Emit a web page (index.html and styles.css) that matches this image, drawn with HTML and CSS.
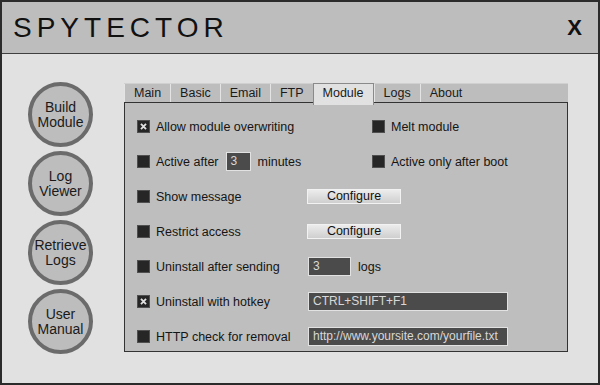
FILE: index.html
```html
<!DOCTYPE html>
<html>
<head>
    <link rel="stylesheet" href="styles.css">
</head>
<body>
    <div class="window">
        <div class="titlebar">
            <h1 class="title">SPYTECTOR</h1>
            <span class="close">X</span>
        </div>

        <div class="main">
            <div class="side">
                <div class="round-btn">Build<br>Module</div>
                <div class="round-btn">Log<br>Viewer</div>
                <div class="round-btn">Retrieve<br>Logs</div>
                <div class="round-btn">User<br>Manual</div>
            </div>

            <div class="panel">
                <ul class="tabs">
                    <li class="tab">Main</li>
                    <li class="tab">Basic</li>
                    <li class="tab">Email</li>
                    <li class="tab">FTP</li>
                    <li class="tab active">Module</li>
                    <li class="tab">Logs</li>
                    <li class="tab">About</li>
                </ul>

                <div class="tab-body">
                    <label class="opt span2"><span class="check checked"><svg viewBox="0 0 13 13"><path d="M3.5 3.5 L9.5 9.5 M9.5 3.5 L3.5 9.5"/></svg></span>Allow module overwriting</label>
                    <label class="opt col3"><span class="check"></span>Melt module</label>

                    <label class="opt span2"><span class="check"></span>Active after <span class="field mins">3</span> minutes</label>
                    <label class="opt col3"><span class="check"></span>Active only after boot</label>

                    <label class="opt"><span class="check"></span>Show message</label>
                    <div class="rest"><button class="config-btn">Configure</button></div>

                    <label class="opt"><span class="check"></span>Restrict access</label>
                    <div class="rest"><button class="config-btn">Configure</button></div>

                    <label class="opt"><span class="check"></span>Uninstall after sending</label>
                    <div class="rest"><span class="field num">3</span> logs</div>

                    <label class="opt"><span class="check checked"><svg viewBox="0 0 13 13"><path d="M3.5 3.5 L9.5 9.5 M9.5 3.5 L3.5 9.5"/></svg></span>Uninstall with hotkey</label>
                    <div class="rest"><span class="field wide">CTRL+SHIFT+F1</span></div>

                    <label class="opt"><span class="check"></span>HTTP check for removal</label>
                    <div class="rest"><span class="field wide">http://www.yoursite.com/yourfile.txt</span></div>
                </div>
            </div>
        </div>
    </div>
</body>
</html>
```

FILE: styles.css
```css
/* Janela principal */
body {
    margin: 0;
    font-family: "Liberation Sans", Arial, sans-serif;
    color: #151515;
}

.window {
    width: 600px;
    height: 385px;
    box-sizing: border-box;
    border: 2px solid #2b2b2b;
    background-color: #e1e1e1;
}

.titlebar {
    height: 51px;
    background-color: #bdbdbd;
    border-bottom: 1px solid #3f3f3f;
    display: flex;
    align-items: center;
    justify-content: space-between;
    padding: 0 16px 0 11px;
}

.title {
    margin: 0;
    font-size: 28px;
    font-weight: normal;
    letter-spacing: 5px;
    color: #111;
}

.close {
    font-size: 22px;
    font-weight: bold;
    color: #111;
}

.main {
    display: flex;
    padding: 28px 0 0 26px;
}

/* Botoes redondos da esquerda */
.side {
    display: flex;
    flex-direction: column;
    gap: 4px;
}

.round-btn {
    width: 65px;
    height: 65px;
    box-sizing: border-box;
    border: 4px solid #6b6b6b;
    border-radius: 50%;
    background-color: #bdbdbd;
    display: flex;
    align-items: center;
    justify-content: center;
    text-align: center;
    font-size: 14px;
    line-height: 15px;
    color: #1a1a1a;
}

/* Painel com abas */
.panel {
    width: 444px;
    margin: 1px 0 0 31px;
}

.tabs {
    list-style: none;
    margin: 0;
    padding: 0;
    height: 19px;
    display: flex;
    background-color: #bdbdbd;
    border-top: 1px solid #d0d0d0;
    box-sizing: border-box;
}

.tab {
    padding: 0 9px;
    border-left: 1px solid #e4e4e4;
    font-size: 12.5px;
    line-height: 18px;
    color: #1a1a1a;
}

.tab.active {
    background-color: #e1e1e1;
    border: 1px solid #8a8a8a;
    border-bottom: none;
    margin-top: -1px;
    height: 21px;
    position: relative;
    z-index: 1;
}

.tab-body {
    height: 250px;
    box-sizing: border-box;
    border: 1px solid #333;
    background-color: #bebebe;
    padding: 6px 0 0 12px;
    display: grid;
    grid-template-columns: 170px 65px 1fr;
    grid-auto-rows: 35px;
    align-items: center;
    overflow: hidden;
}

.opt {
    display: flex;
    align-items: center;
    font-size: 12.5px;
    white-space: nowrap;
}

.span2 {
    grid-column: 1 / 3;
}

.col3 {
    grid-column: 3;
}

.rest {
    grid-column: 2 / 4;
    display: flex;
    align-items: center;
    font-size: 12.5px;
}

.check {
    width: 13px;
    height: 13px;
    box-sizing: border-box;
    background-color: #262626;
    border: 1px solid #505050;
    margin-right: 6px;
    flex-shrink: 0;
}

.check svg {
    display: block;
    width: 11px;
    height: 11px;
}

.check path {
    stroke: #e0e0e0;
    stroke-width: 2.2;
    fill: none;
}

.field {
    height: 19px;
    box-sizing: border-box;
    background-color: #4b4b4b;
    border: 1px solid #e2e2e2;
    color: #d8d8d8;
    font-size: 12px;
    line-height: 17px;
    padding-left: 4px;
    white-space: nowrap;
    overflow: hidden;
}

.mins {
    width: 25px;
    margin: 0 7px 0 7px;
}

.num {
    width: 43px;
    margin-left: 1px;
    margin-right: 7px;
}

.wide {
    width: 200px;
    margin-left: 1px;
}

.config-btn {
    width: 94px;
    height: 15px;
    margin: -1px 0 0 0;
    padding: 0;
    border: 1px solid #f2f2f2;
    background: linear-gradient(#ececec, #cfcfcf);
    font-family: "Liberation Sans", Arial, sans-serif;
    font-size: 12.5px;
    line-height: 13px;
    color: #111;
}
```
